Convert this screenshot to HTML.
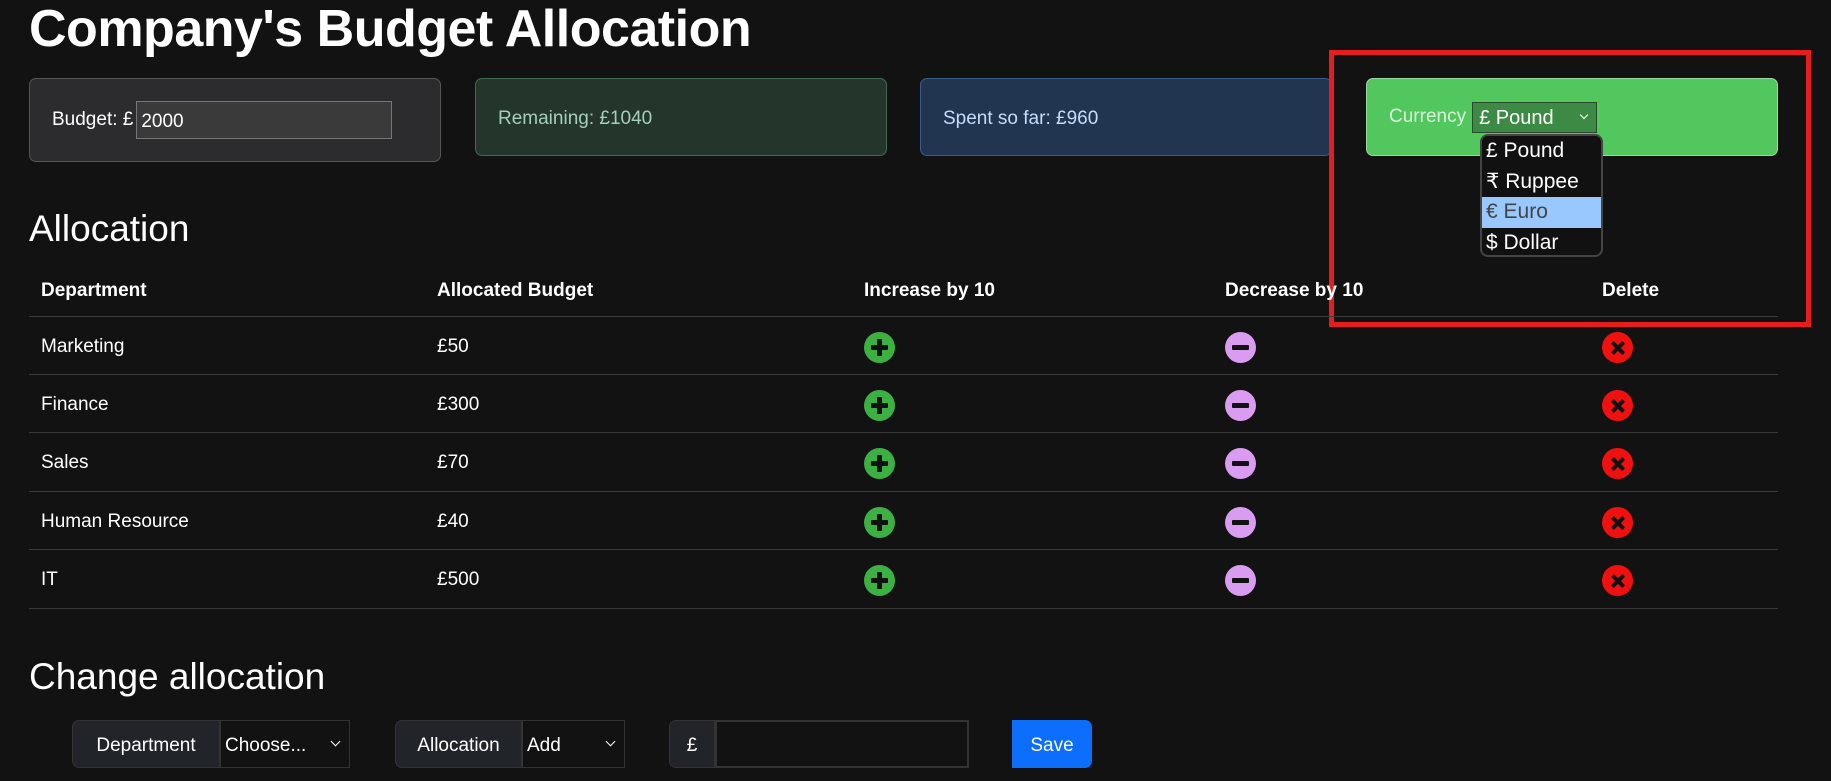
<!DOCTYPE html>
<html><head><meta charset="utf-8"><style>
*{box-sizing:border-box;margin:0;padding:0}
body{width:1831px;height:781px;background:#121212;color:#fff;font-family:"Liberation Sans",sans-serif;font-size:19px;position:relative;overflow:hidden}
.a{position:absolute}
h1{position:absolute;left:29px;top:-1px;font-size:52px;font-weight:600;letter-spacing:-0.5px}
h2{position:absolute;font-size:37px;font-weight:500}
.card{position:absolute;top:78px;height:78px;border:1px solid;border-radius:7px;display:flex;align-items:center;padding-left:22px;padding-top:4px;font-size:19px}
.th{position:absolute;top:280px;font-weight:bold;font-size:19px}
.line{position:absolute;left:29px;width:1749px;height:1px;background:#3a3a3a}
.td{position:absolute;font-size:19px;margin-top:2px}
.ic{position:absolute;width:31px;height:31px;border-radius:50%}
.ic:before,.ic:after{content:"";position:absolute;background:#111;left:50%;top:50%;border-radius:1px}
.plus{background:#3cb043}
.plus:before{width:17px;height:5px;margin:-2.5px 0 0 -8.5px}
.plus:after{width:5px;height:17px;margin:-8.5px 0 0 -2.5px}
.minus{background:#d99cf0}
.minus:before{width:17px;height:5px;margin:-2.5px 0 0 -8.5px}
.minus:after{display:none}
.del{background:#f01010}
.del:before{width:16px;height:4px;margin:-2px 0 0 -8px;transform:rotate(45deg)}
.del:after{width:16px;height:4px;margin:-2px 0 0 -8px;transform:rotate(-45deg)}
.lbl{position:absolute;top:720px;height:48px;background:#212529;border:1px solid #333;border-radius:7px 0 0 7px;display:flex;align-items:center;justify-content:center;font-size:19px;padding-top:3px}
.sel{position:absolute;top:720px;height:48px;border:1px solid #333;display:flex;align-items:center;padding-left:4px;padding-top:3px;font-size:19px}
.chev{position:absolute;right:10px;top:17px;width:7px;height:7px;border-right:1.5px solid #fff;border-bottom:1.5px solid #fff;transform:rotate(45deg)}
</style></head><body>
<h1>Company's Budget Allocation</h1>

<div class="card" style="left:29px;width:412px;height:84px;background:#2c2c2e;border-color:#555;padding-top:0">Budget: £<div style="width:256px;height:38px;background:#3a3a3a;border:1px solid #777;margin-left:3px;padding-left:4px;padding-top:2px;line-height:36px">2000</div></div>
<div class="card" style="left:475px;width:412px;background:#24352c;border-color:#3f6b51;color:#a3cfbb">Remaining: £1040</div>
<div class="card" style="left:920px;width:412px;background:#213450;border-color:#3a5d8c;color:#c6dcfb">Spent so far: £960</div>
<div class="card" style="left:1366px;width:412px;background:#52c75e;border-color:#9bd8a2;color:#d8f3da;padding-top:0">Currency<div style="position:relative;margin-left:6px;width:125px;height:31px;background:#3d8a45;border:1px solid #2a4a2c;color:#fff;padding-left:6px;line-height:31px;font-size:20px">£ Pound<span class="chev" style="top:9px;right:9px;width:6px;height:6px"></span></div></div>

<div class="a" style="left:1480px;top:134px;width:123px;height:123px;background:#111;border:2px solid #444;border-radius:8px;overflow:hidden;font-size:21px;line-height:30.5px">
<div style="padding-left:4px">£ Pound</div><div style="padding-left:4px">₹ Ruppee</div><div style="padding-left:4px;background:#99c8ff;color:#444">€ Euro</div><div style="padding-left:4px">$ Dollar</div></div>

<div class="a" style="left:1329px;top:50px;width:482px;height:277px;border:5px solid #e41e1e"></div>

<h2 style="left:29px;top:208px">Allocation</h2>
<div class="th" style="left:41px">Department</div>
<div class="th" style="left:437px">Allocated Budget</div>
<div class="th" style="left:864px">Increase by 10</div>
<div class="th" style="left:1225px">Decrease by 10</div>
<div class="th" style="left:1602px">Delete</div>
<div class="line" style="top:316px"></div>

<div class="td" style="left:41px;top:334px">Marketing</div><div class="td" style="left:437px;top:334px">£50</div>
<div class="ic plus" style="left:864px;top:332px"></div><div class="ic minus" style="left:1225px;top:332px"></div><div class="ic del" style="left:1602px;top:332px"></div>
<div class="line" style="top:374px"></div>
<div class="td" style="left:41px;top:392px">Finance</div><div class="td" style="left:437px;top:392px">£300</div>
<div class="ic plus" style="left:864px;top:390px"></div><div class="ic minus" style="left:1225px;top:390px"></div><div class="ic del" style="left:1602px;top:390px"></div>
<div class="line" style="top:432px"></div>
<div class="td" style="left:41px;top:450px">Sales</div><div class="td" style="left:437px;top:450px">£70</div>
<div class="ic plus" style="left:864px;top:448px"></div><div class="ic minus" style="left:1225px;top:448px"></div><div class="ic del" style="left:1602px;top:448px"></div>
<div class="line" style="top:491px"></div>
<div class="td" style="left:41px;top:509px">Human Resource</div><div class="td" style="left:437px;top:509px">£40</div>
<div class="ic plus" style="left:864px;top:507px"></div><div class="ic minus" style="left:1225px;top:507px"></div><div class="ic del" style="left:1602px;top:507px"></div>
<div class="line" style="top:549px"></div>
<div class="td" style="left:41px;top:567px">IT</div><div class="td" style="left:437px;top:567px">£500</div>
<div class="ic plus" style="left:864px;top:565px"></div><div class="ic minus" style="left:1225px;top:565px"></div><div class="ic del" style="left:1602px;top:565px"></div>
<div class="line" style="top:608px"></div>

<h2 style="left:29px;top:656px">Change allocation</h2>
<div class="lbl" style="left:72px;width:148px">Department</div>
<div class="sel" style="left:220px;width:130px">Choose...<span class="chev"></span></div>
<div class="lbl" style="left:395px;width:127px">Allocation</div>
<div class="sel" style="left:522px;width:103px">Add<span class="chev"></span></div>
<div class="lbl" style="left:669px;width:46px">£</div>
<div class="sel" style="left:715px;width:254px;border:2px solid #333"></div>
<div class="a" style="left:1012px;top:720px;width:80px;height:48px;background:#0d6efd;border-radius:0 7px 7px 0;display:flex;align-items:center;justify-content:center;font-size:19px;padding-top:3px">Save</div>
</body></html>
